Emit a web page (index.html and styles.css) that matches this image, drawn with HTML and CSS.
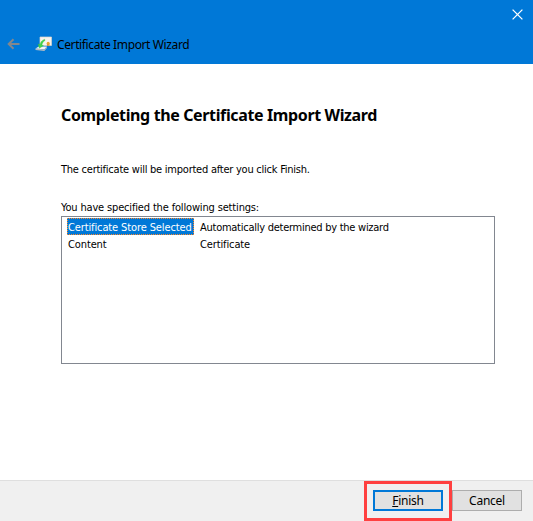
FILE: index.html
```html
<!DOCTYPE html>
<html lang="en">
<head>
<meta charset="utf-8">
<title>Certificate Import Wizard</title>
<link rel="stylesheet" href="styles.css">
</head>
<body>
<div class="window">
  <header class="header">
    <div class="caption">
      <svg class="close" width="11" height="11" viewBox="0 0 11 11"><path d="M.6.6l9.8 9.8M10.4.6L.6 10.4"/></svg>
    </div>
    <div class="nav">
      <svg class="back" width="13" height="12" viewBox="0 0 13 12"><path d="M12.5 6H2M6.5 1.2L1.7 6l4.8 4.8"/></svg>
      <svg class="icon" width="18" height="18" viewBox="0 0 18 18">
        <path d="M5 2h11.5v8.5H5z" fill="#f7f3ee" stroke="#d8d4cc" stroke-width=".7"/>
        <path d="M11.9 9v2.3l1.3-.8 1.2.8V9z" fill="#c98a3c"/>
        <circle cx="13.2" cy="8.2" r="1.5" fill="#e8a22e"/>
        <path d="M.5 13.4l3.3-2h8.2l-2.7 3z" fill="#f3f4f5"/>
        <path d="M.5 13.4l8.8 1 2.7-3v1.7L9.3 16l-8.8-1z" fill="#b3bbc2"/>
        <path d="M9.6 4.2C7 5.2 5.6 7 5 9.4l-1.9-.3 1.3 4.2 4.1-2.7-1.6-.6c.4-2 1.4-3.6 3.2-4.6z" fill="#42d54a" stroke="#2db53c" stroke-width=".3"/>
      </svg>
      <span class="title">Certificate Import Wizard</span>
    </div>
  </header>
  <main class="content">
    <h1 class="heading">Completing the Certificate Import Wizard</h1>
    <p class="intro">The certificate will be imported after you click Finish.</p>
    <p class="label">You have specified the following settings:</p>
    <div class="list">
      <div class="row">
        <span class="name selected">Certificate Store Selected</span>
        <span class="value">Automatically determined by the wizard</span>
      </div>
      <div class="row">
        <span class="name">Content</span>
        <span class="value short">Certificate</span>
      </div>
    </div>
  </main>
  <footer class="footer">
    <div class="highlight"><button class="button primary"><u>F</u>inish</button></div>
    <button class="button">Cancel</button>
  </footer>
</div>
</body>
</html>
```
FILE: styles.css
```css
* { box-sizing: border-box; }
body {
  margin: 0;
  font: 11px/17px "DejaVu Sans Condensed", "Noto Sans", sans-serif;
  color: #000;
}
.window {
  width: 533px;
  height: 521px;
  overflow: hidden;
  display: flex;
  flex-direction: column;
  background: #fff;
}
.header { height: 64px; background: #0078d7; }
.caption {
  height: 34px;
  display: flex;
  justify-content: flex-end;
  padding: 9px 10px 0 0;
}
.close { fill: none; stroke: #fff; stroke-width: 1.3; }
.nav { display: flex; align-items: center; height: 20px; padding-left: 7px; }
.back { fill: none; stroke: #83878c; stroke-width: 2; }
.icon { margin-left: 15px; }
.title {
  margin: 1px 0 0 4px;
  font: 12px/18px "Noto Sans", sans-serif;
  letter-spacing: -0.38px;
  white-space: nowrap;
}
.content { flex: 1; padding: 39px 38px 0 61px; white-space: nowrap; }
.heading {
  margin: 0;
  font: bold 16px/24px "Noto Sans", sans-serif;
  letter-spacing: -0.37px;
}
.intro { margin: 34px 0 0; letter-spacing: -0.24px; }
.label { margin: 21px 0 0; letter-spacing: -0.16px; }
.list {
  height: 148px;
  border: 1px solid #828790;
  padding: 1px 5px;
}
.row { display: flex; height: 17px; }
.name { width: 127px; padding: 0 0 0 1px; letter-spacing: -0.12px; }
.name, .value { line-height: 19px; }
.selected {
  background: #0078d7;
  color: #fff;
  border: 1px dotted #ff8728;
  padding-left: 0;
  line-height: 17px;
}
.value { margin-left: 6px; letter-spacing: -0.26px; }
.short { letter-spacing: -0.12px; }
.footer {
  height: 41px;
  display: flex;
  align-items: flex-start;
  background: #f0f0f0;
  border-top: 1px solid #dfdfdf;
  padding-left: 364px;
}
.highlight {
  width: 88px;
  height: 40px;
  border: 3px solid #ff4040;
  padding: 6px;
}
.button {
  width: 70px;
  height: 21px;
  padding: 0;
  border: 1px solid #adadad;
  background: #e1e1e1;
  color: #000;
  font: 12px/18px "Noto Sans", sans-serif;
  letter-spacing: -0.25px;
}
.footer > .button { margin-top: 9px; }
.primary { display: block; border: 2px solid #0078d7; line-height: 16px; }
```
